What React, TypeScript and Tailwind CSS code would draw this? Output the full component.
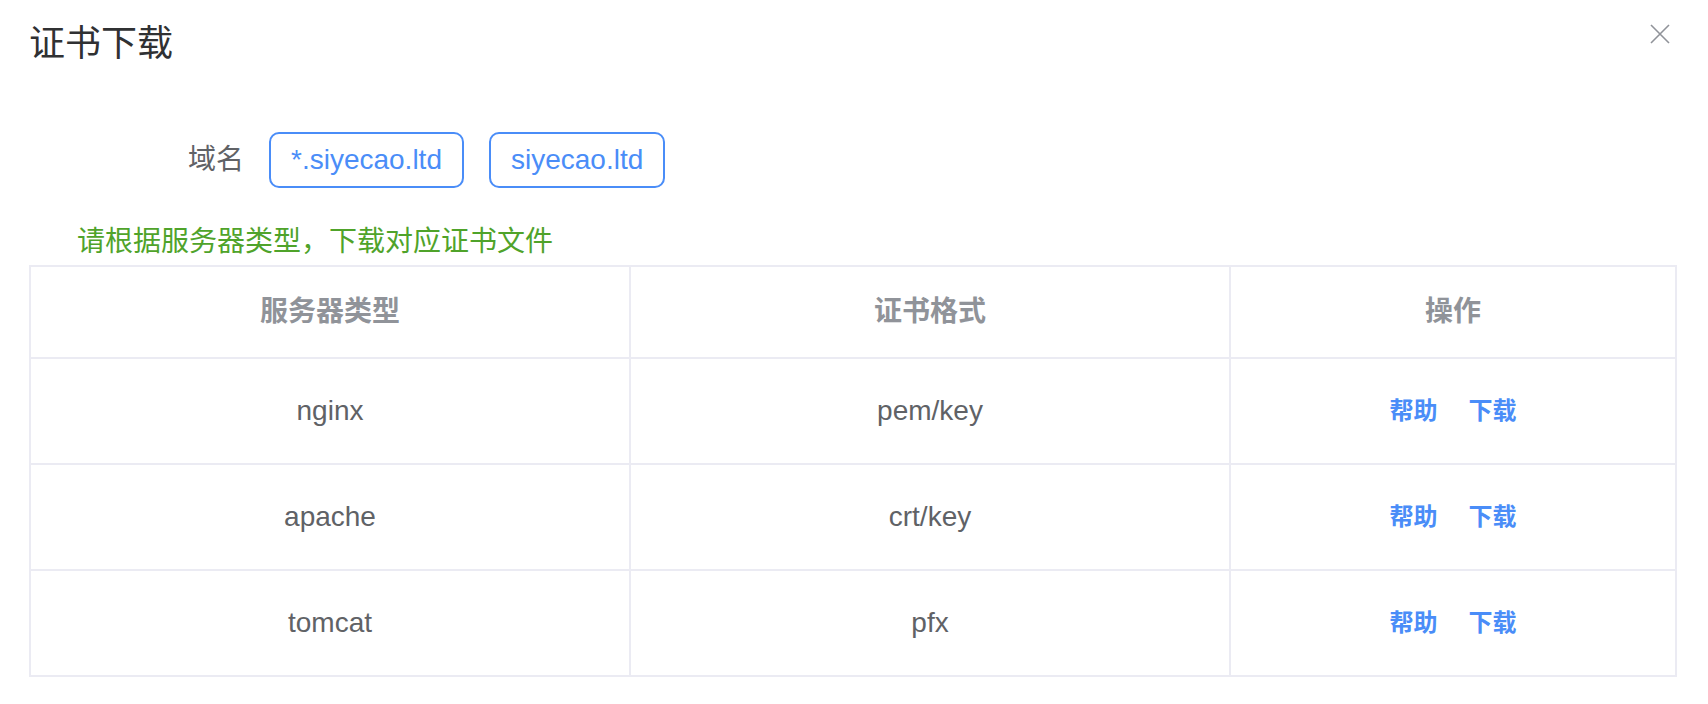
const rows = [
  { server: "nginx", format: "pem/key" },
  { server: "apache", format: "crt/key" },
  { server: "tomcat", format: "pfx" }
];

const domains = ["*.siyecao.ltd", "siyecao.ltd"];

const cell = "flex items-center justify-center border-r-2 border-b-2 border-[#ebebf3]";

export default function App() {
  return (
    <div
      className="h-[704px] w-full bg-white"
      style={{ fontFamily: '"Liberation Sans", "Noto Sans CJK SC", sans-serif' }}
    >
      <div className="flex items-start justify-between pl-[29px] pr-[38px] pt-[20px]">
        <span className="text-[36px] leading-[48px] text-[#303133]">证书下载</span>
        <button className="mt-[4px] text-[#909399]" aria-label="关闭">
          <svg width="20" height="20" viewBox="0 0 20 20" fill="none" stroke="currentColor" strokeWidth="1.6">
            <path d="M1 1L19 19M19 1L1 19" />
          </svg>
        </button>
      </div>

      <div className="mt-[64px] flex items-center pl-[29px]">
        <span className="w-[215px] text-right text-[28px] text-[#606266]">域名</span>
        <div className="ml-[25px] flex gap-[25px]">
          {domains.map((d) => (
            <span
              key={d}
              className="flex h-[56px] items-center rounded-[10px] border-2 border-[#4a8df8] px-[20px] text-[28px] text-[#4a8df8]"
            >
              {d}
            </span>
          ))}
        </div>
      </div>

      <div className="mt-[36px] pl-[77px] text-[28px] leading-[36px] text-[#4fa32a]">
        请根据服务器类型，下载对应证书文件
      </div>

      <div className="ml-[29px] mt-[5px] grid w-fit grid-cols-[600px_600px_446px] border-l-2 border-t-2 border-[#ebebf3] text-[28px]">
        {["服务器类型", "证书格式", "操作"].map((h) => (
          <div key={h} className={`${cell} h-[92px] font-bold text-[#909399]`}>
            {h}
          </div>
        ))}
        {rows.map((r) => (
          <div key={r.server} className="contents">
            <div className={`${cell} h-[106px] text-[#606266]`}>{r.server}</div>
            <div className={`${cell} h-[106px] text-[#606266]`}>{r.format}</div>
            <div className={`${cell} h-[106px] gap-[31px] text-[24px] font-bold text-[#4a8df8]`}>
              <a className="cursor-pointer">帮助</a>
              <a className="cursor-pointer">下载</a>
            </div>
          </div>
        ))}
      </div>
    </div>
  );
}
